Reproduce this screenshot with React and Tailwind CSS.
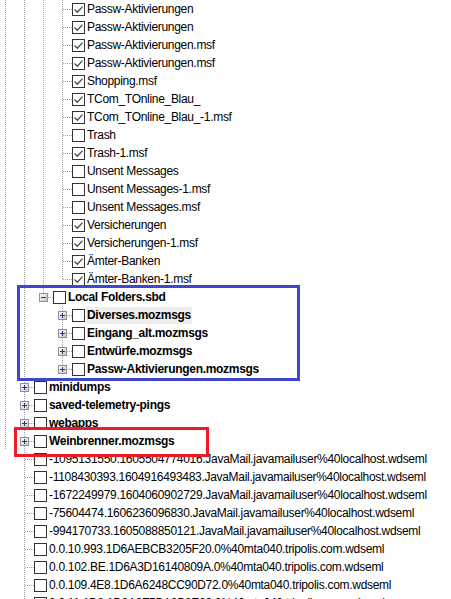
import React from 'react';

// guides: which ancestor columns still draw a vertical line
// kind: 'plus' | 'minus' for folders that have an expander
const C = [true, true, true];
const mk = (label, checked, depth, guides, opts = {}) => ({ label, checked, depth, guides, ...opts });

const rows = [
    mk('Passw-Aktivierungen', true, 3, C),
    mk('Passw-Aktivierungen', true, 3, C),
    mk('Passw-Aktivierungen.msf', true, 3, C),
    mk('Passw-Aktivierungen.msf', true, 3, C),
    mk('Shopping.msf', true, 3, C),
    mk('TCom_TOnline_Blau_', true, 3, C),
    mk('TCom_TOnline_Blau_-1.msf', true, 3, C),
    mk('Trash', false, 3, C),
    mk('Trash-1.msf', true, 3, C),
    mk('Unsent Messages', false, 3, C),
    mk('Unsent Messages-1.msf', false, 3, C),
    mk('Unsent Messages.msf', false, 3, C),
    mk('Versicherungen', true, 3, C),
    mk('Versicherungen-1.msf', true, 3, C),
    mk('Ämter-Banken', true, 3, C),
    mk('Ämter-Banken-1.msf', true, 3, C, { last: true }),
    mk('Local Folders.sbd', false, 2, [true, true], { kind: 'minus', bold: true, last: true }),
    mk('Diverses.mozmsgs', false, 3, [true, true, false], { kind: 'plus', bold: true, selected: true }),
    mk('Eingang_alt.mozmsgs', false, 3, [true, true, false], { kind: 'plus', bold: true }),
    mk('Entwürfe.mozmsgs', false, 3, [true, true, false], { kind: 'plus', bold: true }),
    mk('Passw-Aktivierungen.mozmsgs', false, 3, [true, true, false], { kind: 'plus', bold: true, last: true }),
    mk('minidumps', false, 1, [true], { kind: 'plus', bold: true }),
    mk('saved-telemetry-pings', false, 1, [true], { kind: 'plus', bold: true }),
    mk('webapps', false, 1, [true], { kind: 'plus', bold: true }),
    mk('Weinbrenner.mozmsgs', false, 1, [true], { kind: 'plus', bold: true }),
    mk('-1095131550.1605504774016.JavaMail.javamailuser%40localhost.wdseml', false, 1, [false]),
    mk('-1108430393.1604916493483.JavaMail.javamailuser%40localhost.wdseml', false, 1, [false]),
    mk('-1672249979.1604060902729.JavaMail.javamailuser%40localhost.wdseml', false, 1, [false]),
    mk('-75604474.1606236096830.JavaMail.javamailuser%40localhost.wdseml', false, 1, [false]),
    mk('-994170733.1605088850121.JavaMail.javamailuser%40localhost.wdseml', false, 1, [false]),
    mk('0.0.10.993.1D6AEBCB3205F20.0%40mta040.tripolis.com.wdseml', false, 1, [false]),
    mk('0.0.102.BE.1D6A3D16140809A.0%40mta040.tripolis.com.wdseml', false, 1, [false]),
    mk('0.0.109.4E8.1D6A6248CC90D72.0%40mta040.tripolis.com.wdseml', false, 1, [false]),
    mk('0.0.11.1D8.1D6A9F5BA2B8E60.0%40mta040.tripolis.com.wdseml', false, 1, [false]),
];

const LINE = '#a0a0a0';

// vertical dotted guide for an ancestor column
const Guide = ({ on }) => (
    <svg className="shrink-0" width="19" height="18" viewBox="0 0 19 18">
        {on && <line x1="5.5" y1="0" x2="5.5" y2="18" stroke={LINE} strokeDasharray="1 1" />}
    </svg>
);

// elbow / tee connector, with the +/- box for folders
const Connector = ({ last, kind }) => (
    <svg className="shrink-0" width="15" height="18" viewBox="0 0 15 18">
        <defs>
            <linearGradient id="exp-grad" x1="0" y1="0" x2="1" y2="1">
                <stop offset="0" stopColor="#ffffff" />
                <stop offset="1" stopColor="#c4c4c4" />
            </linearGradient>
        </defs>
        <line x1="5.5" y1="0" x2="5.5" y2={last ? 10 : 18} stroke={LINE} strokeDasharray="1 1" />
        <line x1="6" y1="9.5" x2="15" y2="9.5" stroke={LINE} strokeDasharray="1 1" />
        {kind && (
            <g>
                <rect x="1.5" y="5.5" width="8" height="8" fill="url(#exp-grad)" stroke="#919191" />
                <path d="M3 9.5h5" stroke="#26367f" />
                {kind === 'plus' && <path d="M5.5 7v5" stroke="#26367f" />}
            </g>
        )}
    </svg>
);

const Checkbox = ({ checked }) => (
    <div className="flex h-[13px] w-[13px] shrink-0 items-center justify-center border border-[#333333] bg-white">
        {checked && (
            <svg width="11" height="11" viewBox="0 0 11 11">
                <path d="M1.5 5.5l2.8 2.8L9.5 2.6" fill="none" stroke="#4a4a4a" strokeWidth="1.3" />
            </svg>
        )}
    </div>
);

const TreeRow = ({ row }) => (
    <div className="flex h-[18px] items-center">
        {row.guides.map((g, i) => (
            <Guide key={i} on={g} />
        ))}
        <Connector last={row.last} kind={row.kind} />
        <Checkbox checked={row.checked} />
        <span
            className={`ml-[1px] flex h-[17px] items-center whitespace-nowrap px-[1px] text-[12px] tracking-[-0.3px] text-black ${row.bold ? 'font-bold' : ''} ${row.selected ? 'bg-[#eeeeee]' : ''}`}
        >
            {row.label}
        </span>
    </div>
);

export default function App() {
    return (
        <div className="relative h-[599px] w-[451px] overflow-hidden bg-white font-['Segoe_UI','Liberation_Sans',sans-serif]">
            <div className="flex flex-col">
                {rows.map((row, i) => (
                    <TreeRow key={i} row={row} />
                ))}
            </div>

            {/* markers drawn over the tree */}
            <div className="pointer-events-none absolute left-[17px] top-[285px] h-[96px] w-[283px] border-[3px] border-[#3f48cc]" />
            <div className="pointer-events-none absolute left-[14px] top-[427px] h-[30px] w-[195px] border-[3px] border-[#ed1c24]" />
        </div>
    );
}
